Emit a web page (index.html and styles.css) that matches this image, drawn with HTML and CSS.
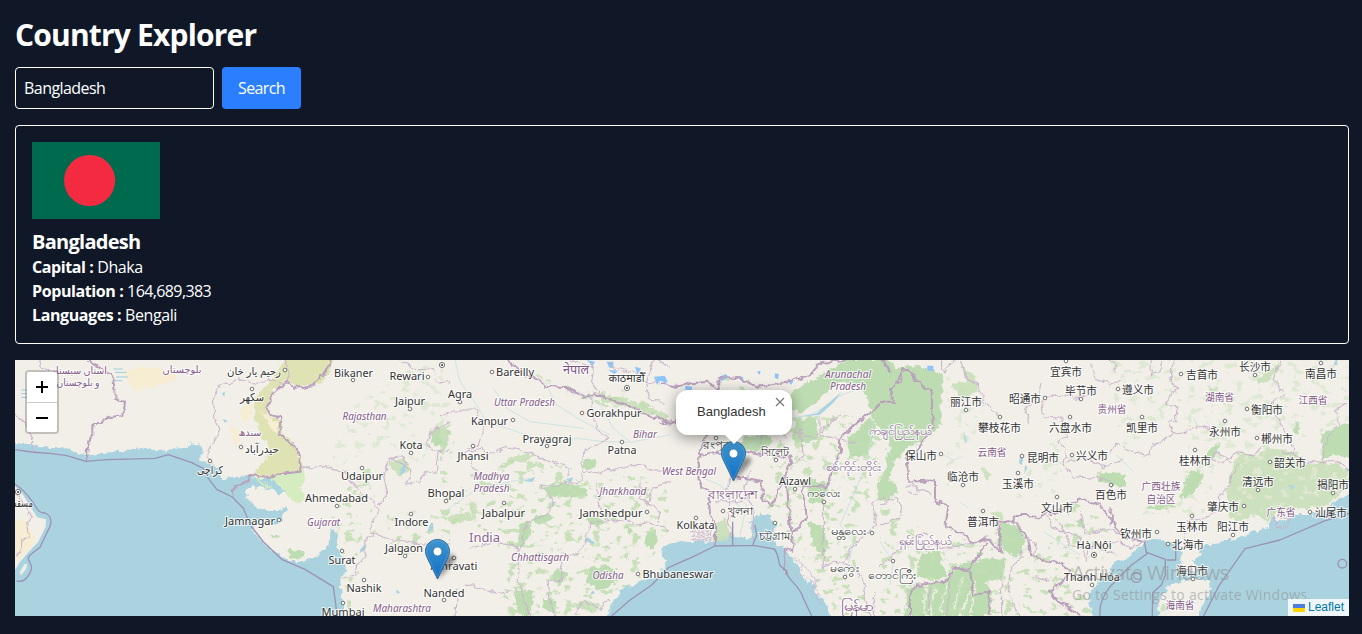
FILE: index.html
```html
<!DOCTYPE html>
<html lang="en">
<head>
<meta charset="utf-8">
<title>Country Explorer</title>
<link rel="stylesheet" href="styles.css">
</head>
<body>
<main class="page">
<h1 class="title">Country Explorer</h1>
<form class="search" onsubmit="return false">
  <input class="search-input" type="text" value="Bangladesh" aria-label="Country">
  <button class="search-button">Search</button>
</form>
<section class="card">
  <svg class="flag" viewBox="0 0 1000 600" role="img" aria-label="Flag of Bangladesh"><path fill="#006a4e" d="M0 0h1000v600H0z"/><circle cx="450" cy="300" r="200" fill="#f42a41"/></svg>
  <h2 class="name">Bangladesh</h2>
  <p><b>Capital :</b> <span>Dhaka</span></p>
  <p><b>Population :</b> <span class="number">164,689,383</span></p>
  <p><b>Languages :</b> <span>Bengali</span></p>
</section>
<section class="map">
<svg class="tiles" viewBox="15 360 1334 256">
<defs>
  <filter id="rough" x="-10%" y="-10%" width="120%" height="120%"><feTurbulence type="fractalNoise" baseFrequency=".045" numOctaves="3" seed="4"/><feDisplacementMap in="SourceGraphic" scale="20" xChannelSelector="R" yChannelSelector="G"/></filter>
  <filter id="edge" x="-10%" y="-10%" width="120%" height="120%"><feTurbulence type="fractalNoise" baseFrequency=".06" numOctaves="3" seed="9"/><feDisplacementMap in="SourceGraphic" scale="22" xChannelSelector="R" yChannelSelector="G"/></filter>
  <filter id="speckle"><feTurbulence type="fractalNoise" baseFrequency=".035 .05" numOctaves="5" seed="3" result="n"/><feColorMatrix in="n" values="0 0 0 0 0 0 0 0 0 0 0 0 0 0 0 10 0 0 0 -5.8"/><feComposite in="SourceGraphic" operator="in"/></filter>
  <filter id="shade" x="-1" y="-1" width="3" height="3"><feGaussianBlur stdDeviation="2"/></filter>
  <linearGradient id="blue" x2="0" y2="1"><stop stop-color="#3d95ce"/><stop offset="1" stop-color="#126fc6"/></linearGradient>
  <g id="pin"><path d="M12.5 41L27 25q6-7 1-9-6-2-10 7z" fill="#000" opacity=".42" filter="url(#shade)"/><path d="M12.5.5C5.8.5.5 5.8.5 12.3c0 3.2 1.2 5.5 2.6 8.4L12.5 40l9.4-19.3c1.4-2.9 2.6-5.2 2.6-8.4C24.500 5.800 19.200.500 12.500.500z" fill="url(#blue)" stroke="#2e6c97"/><path d="M12.500 1.600C6.400 1.600 1.600 6.400 1.600 12.300c0 3 1.100 5.200 2.500 7.900l8.400 17.300 8.400-17.300c1.400-2.700 2.500-4.900 2.500-7.900 0-5.900-4.800-10.700-10.900-10.700z" fill="none" stroke="#fff" stroke-opacity=".13"/><circle cx="12.500" cy="12.500" r="4.400" fill="#fff" stroke="#2e6c97" stroke-width=".7"/></g>
</defs>
<path fill="#f2efe9" d="M15 360h1334v256H15z"/>

<!-- Pakistan and western India -->
<g transform="translate(220 355) scale(.33333)">
  <g filter="url(#edge)">
    <path class="sea" d="M-640 262L-565 268-505 280-460 277-435 290-398 302-330 290-260 285-235 276-190 288-160 284-100 278-85 265-55 270-52 295-60 318-42 325-20 330-5 345 5 370 40 366 88 362 115 372 170 405 200 425 190 440 205 460 175 510 130 500 100 515 100 530 130 565 185 605 235 625 290 605 325 575 330 525 345 518 355 550 352 580 375 625 378 650 360 665 368 740 372 800H-640z"/>
    <path class="sand" d="M-285 40L-140 40-130 80-200 95-255 108-285 70zM100 140L90 200 65 195 60 165zM30 210L55 225 55 275 40 265z"/>
    <path class="scrub" d="M208 0L350 0 325 55 300 85 225 95 200 72 160 105 145 150 135 175 180 190 185 235 210 255 235 300 250 345 225 355 200 350 170 362 100 360 140 310 145 280 120 230 105 190 105 130 150 75z"/>
    <path class="sand" d="M120 165l50 35 15 50-35-35z"/>
    <path class="meadow" d="M105 370L250 345 260 375 240 395 258 430 230 445 195 420 180 385 150 400 130 390z"/>
    <path class="land" d="M78 405L100 393 150 403 195 412 215 435 200 452 182 465 150 470 110 455 80 430z"/>
    <path class="sea" d="M115 372h40l20 15 20 25-20 5-30-28z"/>
    <path class="wood" d="M148 540h35l-10 10zM205 585l40 3 10 15-20 8-25-8zM635 230l30-15 28 20-25 40-30 2z"/>
    <path class="lightwood" d="M500 325l55-20 15 40-25 25z"/>
  </g>
  <g class="speckle faint" filter="url(#speckle)"><path d="M360 180L500 90 600 20 690 50 690 170 600 330 500 260 420 300 330 350z"/></g>
  <g class="speckle" filter="url(#speckle)"><path d="M385 360L450 340 480 520 420 570 420 640 385 780 365 590 330 500zM500 480L690 450V600H510z"/></g>
  <g class="lake"><path d="M540 345q12-18 20-23l-6 30-18 10 8-13zM627 515q8-18 13-8l-2 20-15 3zM420 585q10-12 20-17l-5 18-16 8zM528 704l13 8-10 5zM5 115l10-5-2 15zM8 192l8 2 7 5-9 4z"/></g>
  <g class="border" filter="url(#rough)">
    <path class="national" d="M345 0L310 60 280 90 220 100 200 80 160 110 142 160 150 180 185 190 180 240 215 260 235 300 245 350 195 355 145 365 90 360 85 380 45 395 35 420"/>
    <path d="M-20 330L-40 300 0 225-15 190-20 130 0 90 60 75 110 85 160 75 200 85 208 55 190 0M245 335L325 335 350 345 375 350 410 400 460 440 475 465 450 515 460 540 430 560 440 600 410 630 405 660 370 670M475 450L505 420 490 360 510 310 540 320 570 345 560 390 600 380 620 350 645 355 655 290 690 285M690 200L630 230 620 270 650 290M690 85L650 80 640 40 590 45 540 15M450 530L500 550 570 560 690 570M505 310l40-5 25 25"/>
  </g>
</g>

<!-- Oman and Balochistan coast -->
<g transform="translate(0 355) scale(.33333)">
  <path class="land" d="M45 393L70 420 94 460 112 487 138 493 137 515 115 560 85 592 60 620 45 645zM60 650l14-24 7 2-3 14-16 20z"/>
  <path class="sand" d="M45 500l20-10 18 20 22 35-2 20-28 30-15 20-15-10z"/>
  <path class="stripes" d="M340 42h28M345 52h35M348 66h36M345 77h22M65 105h25M63 116h23M64 127h20"/>
  <g class="border">
    <g filter="url(#rough)"><path d="M117 15L120 35 145 45M45 177L75 205 98 250 98 290M45 410L98 488 80 500 85 550 65 555 65 590 50 600"/><path class="national" d="M265 15L300 40 340 60 345 135 375 140 370 180 315 190 300 210 280 210 280 240 265 255 260 318"/></g>
    <path class="marine" d="M45 284L95 291 155 296 200 302 258 319 320 314 465 310 505 299 575 323 610 340 625 370 650 403 697 426 730 460 752 512 790 560 845 613 915 643 1000 695 1012 783M45 387Q75 407 97 440C113 463 115 474 135 474 160 485 155 510 142 530L120 577 90 600C76 615 95 620 95 640 90 660 75 684 50 678"/>
  </g>
</g>

<!-- Central India -->
<g transform="translate(440 355) scale(.33333)">
  <g filter="url(#edge)">
    <path class="wood" d="M310 395l60-15 65 18 10 22-60 10-60-6zM430 310l40 5-5 28-40-5zM240 510l30-15 5 30-25 50-20 5zM275 490l45-15 25 10-50 30zM620 530l25-5 8 30-22 30-18-20zM550 510l30 15-15 12zM450 640l50-10 30 30-20 40-40 5-30-30zM350 640l35 20-25 30-25-20zM220 700l60 10-5 73h-40zM310 735h40l-5 35-35-10zM435 490l40-5 20 20-30 10z"/>
    <path class="lightwood" d="M0 490l90-20 20 20-60 15zM180 330l50-30 55-5-30 25zM465 115l80 12 85 30 60 25-5 15-90-35-100-18zM390 755l50-20 40 15-15 20zM0 220l20-10 5 60-20 25z"/>
  </g>
  <g class="speckle" filter="url(#speckle)"><path d="M60 370L250 300 380 330 450 370 580 350 680 400 690 520 600 670 520 750 440 783H180L210 600 80 500 0 510V440zM0 180L50 220 20 400H0zM220 20l120 50 80 40 120-10 110 60-20 40-150-50-100-30z"/></g>
  <path class="river" d="M45 15L60 80 110 150 140 200 230 230 320 265 410 250 490 260 570 262 690 240M160 100L200 160 270 200 430 220M415 110L480 150 520 220 570 260M315 80L350 150 430 200 510 240M20 465L100 410 210 380 270 370"/>
  <path class="lake" d="M250 378l35-12-7 15zM378 372l22-5-8 18zM440 545l25 18-10 5-18-12zM450 720l8-14 7 9zM575 685l-30 20 5 5z"/>
  <path class="sky" d="M440 15l25 5-7 13zM500 20h20v18h-12zM585 36l18 4-10 20zM642 65l32-3 10 20-25-5-8 13zM505 45l30 2-12 10z"/>
  <g class="border" filter="url(#rough)">
    <path class="national" d="M205 15L250 55 285 70 320 95 385 100 430 125 470 120 560 150 620 180 690 205"/>
    <path d="M385 15L460 35 455 85 475 110 450 120 470 220 510 250 430 290 425 380 390 385 385 335 340 325 270 295 200 275 145 300 125 280 75 290 110 350M0 185L45 165 110 165 130 220 115 270 80 280M425 345L480 355 500 340 530 345 600 325 630 345 690 345M470 380L480 460 500 500 560 495 600 510 620 500 690 525M385 385L305 395 345 440 320 480 265 500 240 580 210 570 165 560 130 570 90 580M500 500L450 505 435 560 420 595 360 605 370 675 325 680 330 740 350 783M240 580L235 680 270 783M80 690L130 700 170 715 220 710M45 783L50 700M640 15L620 80 625 130 670 145M655 15L690 40M400 783L430 740 480 760 510 735M600 380L600 430 655 460 655 500M690 380L640 400 620 450 600 430M500 20L530 40 575 50 610 80 660 80"/>
  </g>
</g>

<!-- Bangladesh, the Bay of Bengal and Myanmar -->
<g transform="translate(660 355) scale(.33333)">
  <g filter="url(#edge)">
    <path class="sea" d="M-165 800L-140 740-110 700-60 680-10 665 10 640 22 620 2 600 5 578 30 565 90 560 155 560 165 545 215 540 245 548 270 535 262 500 290 487 310 475 330 480 345 510 350 545 345 570 370 580 395 610 420 640 430 670 465 690 480 720 505 760 520 800z"/>
    <path class="wood" d="M395 165L355 140 430 90 560 15H690L710 40 770 30 850 60 840 220 790 250 730 290 690 340 680 440 650 430 655 380 700 320 680 230 640 200 625 140 600 90 540 80 480 130 430 170zM250 250l65-20 25 30-50 30-60-10zM410 195l60-5 5 55-30 20-50-10zM445 370l60 15-15 60-45-5zM445 500l40 10 20 60-20 35-30-50zM560 235l70-45 20 30-25 80-55 10z"/>
    <path class="land" d="M500 190l50-25 50-15 40 20-50 60-80 45zM700 160l40-30 30 20-30 80-40 30z"/>
    <path class="lightwood" d="M170 505l25-15 20 55-25 12h-30z"/>
    <path class="land" d="M225 500l20-12 28 15 2 40-15 15-15-30-15 22zM465 690l20 15-3 18-18-10z"/>
  </g>
  <g class="speckle" filter="url(#speckle)"><path d="M180 65L270 70 380 120 430 160 560 180 640 200 690 300 690 500 610 430 580 600 630 783H530L440 620 390 560 310 440 330 330 380 200 270 120z"/></g>
  <path class="river" d="M560 50L600 100 545 120 510 145 450 180 390 190 340 200 220 330 200 400 260 450 240 540M130 370L180 390 260 480M640 200L620 330 540 510 580 560 555 680"/>
  <path class="water" d="M545 110l-35 30-40 35-50 10 60-6 40-36z"/>
  <path class="sky" d="M0 65l20 10-5 15zM180 65l18-8 7 10-20 12zM232 65h17v13zM290 50l12-3-3 12zM345 55l12 3-3 15-10-5zM382 78l20-4-8 15zM75 92l22 3-5 20-15-5z"/>
  <g class="border" filter="url(#rough)">
    <path class="national" d="M0 85L50 95 95 85 145 80 175 110 180 65 240 70 290 95 340 90 400 75 450 60 480 25 590 10M0 205L60 200 100 200 140 240 130 270 115 300 175 290 225 315 260 290 300 300 350 300 395 305 380 350 370 385 355 405 335 455 310 435 305 380 215 365 205 325M115 300L120 390 145 410 150 480 165 500 165 575M380 385L385 440 395 540 400 590 370 580 375 640 380 660M690 130L650 155 620 180 590 205 540 250 540 290 505 380 500 395 430 390 440 490 400 530M690 50L665 15"/>
    <path d="M215 365L200 400 210 440 205 490 215 560M270 340L255 410 280 460 280 560M165 440L240 440 260 420M300 300L305 230 360 220 380 250M400 230L470 250 500 210 540 180M410 320L430 300 420 220M480 190L480 240 590 265M495 395L490 440 490 590 490 640M690 420L635 440 650 510 610 545 580 570 550 620M490 635L540 620 590 640 615 690 610 720 630 783M645 710L640 783"/>
  </g>
  <path class="border mesh" filter="url(#rough)" d="M95 520L155 525M90 532L155 535M92 544L155 545M95 554H155M105 515V560M117 510V560M129 518V560M141 520V560M152 525V560M390 610L430 630 425 660 465 685 460 715 490 750M405 605L460 660 475 720M385 630L420 680"/>
  <path class="border marine" d="M-145 783L-90 735-25 690 25 638 95 607 165 573 280 571 343 582C365 610 345 630 377 645 380 675 420 690 430 730L455 783M218 500V571M285 510L290 540 278 571"/>
</g>

<!-- Yunnan, Laos and northern Vietnam -->
<g transform="translate(880 355) scale(.33333)">
  <g filter="url(#edge)">
    <path class="wood" d="M0 100L55 60 120 100 155 115 155 210 110 260 55 260 0 220zM20 300l30-10-15 60-20 30zM0 375l35 5 25 30-60 25zM120 600l60-15 5 45 20 35-45 10-50-10zM80 700l110-20 50-50 80-20 60 5-15 55-60 15-40 30-30 68H75zM290 660l40 40 5 83h-90zM360 505l50 5 25 40-5 45-30 10-45-35zM652 355l70 0v40l-70-20zM585 500l30-15-5 40z"/>
    <path class="lightwood" d="M210 90l70-15 15 30-45 30zM300 330l30 30-10 15zM240 30l50 40-10 25zM330 470l40 5-5 20z"/>
    <path class="stripe-land" d="M140 690l-10 90M165 700l-15 80M205 680l-25 90M250 665l-30 100M285 675l-10 100"/>
  </g>
  <g class="speckle" filter="url(#speckle)"><path d="M0 400L120 520 120 783H0zM120 580L350 530 450 570 580 640 640 783H150zM540 430L690 480 670 620 500 600z"/></g>
  <g class="speckle faint" filter="url(#speckle)"><path d="M200 60L330 130 260 300 200 400zM500 250L620 300 520 420 400 430z"/></g>
  <path class="sky" d="M142 32h18v18l-18-5z"/><path class="lake" d="M420 305l10 5-5 20-8-5zM435 330l7 8-9 20zM250 230l10 30-5 5z"/>
  <path class="river" d="M250 230L265 260M0 560L40 620 30 690M190 300l30 15 30-10M490 530L600 600M240 440l25 20"/>
  <g class="border" filter="url(#rough)">
    <path class="national" d="M0 140L40 145 30 100 60 80 65 40 90 50 125 90 155 110 158 215 130 260 110 290 80 310 85 380 165 375 165 440 205 455 195 520 240 530 280 565 325 550 360 590 355 500 395 495 410 480 440 480 475 490 515 465 515 480 600 430 660 450 700 500 690 510M395 495L440 540 450 600 500 620 545 625 570 650 555 670 510 710 520 730 590 770 600 783M320 560L270 640 215 640 200 680 110 690 90 720 90 783M215 640L270 650 280 720 330 710 325 783"/>
    <path d="M180 15L190 50 225 15M240 15L265 75 295 90 310 140 360 185M720 75L690 90 640 65 635 25M480 80L470 130 440 155 445 205M490 180L485 140 510 120 590 130 640 110M490 185L545 190 560 245 535 260 560 295 550 330 580 365 640 370 720 380M560 325l50-20 60 30 60-25M0 450L50 430 65 455 60 490 0 510M85 380L115 400 155 420M100 560L195 580 280 565M0 635L50 590 100 550 140 530M150 700L145 783M215 640L200 783M400 490L420 540 470 570 460 610M430 590L390 645 385 720 420 783M500 470L510 510 550 530 600 550 620 620M540 500L570 570 610 580 690 560M600 470L620 540 690 520 720 540M620 600L640 570 710 600M465 665l40 10M365 650v130M80 390L110 400 115 420 85 410"/>
  </g>
</g>

<!-- South China -->
<g transform="translate(1110 355) scale(.33333)">
  <g filter="url(#edge)">
    <path class="sea" d="M-50 800L-65 735-45 690 0 655 10 625 30 618 50 610 90 575 110 560 150 548 170 560 210 565 215 600 210 645 265 650 245 620 270 605 265 585 275 572 330 565 380 550 430 530 470 520 490 480 500 500 530 490 550 480 600 480 640 470 690 430 745 405V800z"/>
    <path class="land" d="M145 800L145 740 170 700 210 680 260 675 300 675 302 700 280 750 265 800z"/>
    <path class="wood" d="M0 355h45v40L0 392zM240 350l25-5 15 20-30 50-40 20 10-40zM105 455l80-10 15 10-60 10zM300 280l30-20-15 45-25 10zM555 200l15 5-5 35-15-10zM635 235l90-35v110l-60-10-30 15z"/>
    <path class="lightwood" d="M385 295L440 300 470 280 560 290 575 330 640 320 690 330 717 350 710 400 650 450 580 460 520 460 470 500 440 480 380 500 360 480 350 400 365 350zM290 90l30 10-15 25zM440 80l65-60 10 15-50 50zM150 765l15-20 10 25z"/>
  </g>
  <g class="speckle faint" filter="url(#speckle)"><path d="M0 15H190L180 200 30 280zM260 220L360 240 280 480 80 500 200 350zM190 15H717V200L500 280 370 290 200 220z"/></g>
  <g class="speckle pale" filter="url(#speckle)"><path d="M390 300L560 300 700 340 690 410 520 450 370 490z"/></g>
  <path class="lake" d="M535 390l20 2-10 12zM670 30l10-20 3 20z"/><path class="river" d="M20 300L70 350M250 190L260 205M500 410l60-20M180 730l20 20"/>
  <g class="border" filter="url(#rough)">
    <path d="M120 15L125 60 150 50 155 15M190 15L180 70 200 100 165 145 200 155 200 200 175 200 195 235M0 295L20 265 50 285 115 300 130 270 195 235 220 230 270 215 320 225M515 15L490 60 520 120 480 145 510 200 545 270 550 300 520 290M365 325L320 290 300 310M300 310L335 325 385 290 430 300 460 275M385 325L360 380 330 420 325 460 285 490 230 500 225 560M550 300L590 320 635 320 640 280 665 230 685 210 680 160 717 145M635 320L690 320 715 350M0 560L30 560 65 580 110 555M490 490L540 490 535 515 500 515zM0 15L20 30 10 55"/>
    <path class="national" d="M0 460L15 520 50 550 100 560"/>
  </g>
  <path class="border marine" d="M0 695L65 630 110 597 103 560M110 592L166 613 166 660 154 690 128 713 127 783M170 615H197V560M281 783L327 692 405 581 510 555 640 499 717 475M-30 783Q-35 740 0 695"/>
  <circle class="border marine" cx="79" cy="667" r="15"/><circle class="border marine" cx="697" cy="626" r="13"/>
</g>
<g id="labels"></g>
<use href="#pin" x="425" y="539"/><use href="#pin" x="721" y="441"/>
</svg>
<div class="zoom"><button aria-label="Zoom in"><svg viewBox="0 0 12 12"><path d="M0 6h12M6 0v12"/></svg></button><button aria-label="Zoom out"><svg viewBox="0 0 12 12"><path d="M0 6h12"/></svg></button></div>
<div class="popup">Bangladesh<svg class="close" viewBox="0 0 8 8"><path d="M0 0l8 8M8 0L0 8"/></svg></div>
<div class="system-note"><div class="note-title">Activate Windows</div><div class="note-text">Go to Settings to activate Windows.</div></div>
<div class="credit"><svg viewBox="0 0 12 8"><path fill="#4c7be1" d="M0 0h12v4H0z"/><path fill="#ffd500" d="M0 4h12v4H0z"/></svg><a>Leaflet</a></div>
</section>
</main>
<script src="map.js"></script>
</body>
</html>
```
FILE: map.js
```js
// Each label: text, centre x, baseline y, drawn width, kind, optional town dot x and y.
const labels = [
["استان سیستان",78,374,58,"region"],["و بلوچستان",78,386,43,"region"],["بلوچستان",182,373,39,"region"],["رحیم یار خان",254,375,54,"city",285,370],["سکهر",252,401,24,"city",252,389],["سندھ",250,436,23,"region"],["حیدرآباد",262,453,34,"city",241,447],["کراچی",210,474,26,"city",210,461],["مسقط",21,507,24,"city",18,492,2],
["Bikaner",353.500,377,39,"city",353,380],["Rewari",407,380,35,"city",428,377],["Jaipur",410,405,30,"city",410,409],["Rajasthan",364.500,420,44,"region"],["Kota",411,449,23,"city",411,453],["Udaipur",362,480,42,"city",362,468],["Ahmedabad",336.500,502,63,"city",337,506],["Jamnagar",250,525,50,"city",279,520],["Gujarat",323.500,526,33,"region"],["Indore",411.500,526,34,"city",411,514],["Jalgaon",404,552,38,"city",405,556],["Surat",342,564,27,"city",342,551],["Nashik",364,592,35,"city",364,580],["Mumbai",343,616,43,"city",343,603],["Maharashtra",402,612,58,"region"],["Nanded",444,597,41,"city",444,600],["Amravati",454,570,47,"city",454,558],["",0,0,0,"city",442,365,2],
["Bareilly",515,376,38,"city",492,372],["Agra",460,398,24,"city",460,402],["Uttar Pradesh",524.500,406,61,"region"],["Kanpur",489.500,425,37,"city",513,420],["Prayagraj",547,443,49,"city",547,446],["Jhansi",473,460,31,"city",473,446],["Madhya",491.500,480,36,"region"],["Pradesh",491.500,492,36,"region"],["Bhopal",446,497,37,"city",446,501],["Jabalpur",503.500,517,43,"city",504,503],["India",484.500,542,31,"country"],["Chhattisgarh",540,561,58,"region"],["नेपाल",576,374,26,"nation"],["काठमाडौँ",626.500,382,36,"city",627,388,2],["Gorakhpur",614,417,55,"city",582,413],["Bihar",645,438,24,"region"],["Patna",622,454,29,"city",622,442],["Jharkhand",623,495,47,"region"],["Jamshedpur",611,517,63,"city",647,512],["Odisha",608,579,31,"region"],["Bhubaneswar",678,578,71,"city",638,574],
["Kolkata",695.500,529,38,"city",696,518],["West Bengal",689,475,54,"region"],["রংপুর",716,449,26,"city",716,438],["সিলেট",775,456,28,"city",776,460],["বাংলাদেশ",733,499,50,"nation"],["খুলনা",740,515,25,"city",723,511],["চট্টগ্রাম",774.500,540,31,"city",775,523],["Aizawl",795,485,32,"city",795,489],["ကလေး",824,497,35,"city",824,502],["Arunachal",848,378,46,"region"],["Pradesh",848,390,36,"region"],["ကချင်ပြည်နယ်",900,435,63,"region"],["စစ်ကိုင်းတိုင်း",854,471,56,"region"],["မန္တလေး",849,535,37,"city",872,533],["မကွေး",845,572,30,"city",845,577],["တောင်ကြီး",893,579,50,"city",893,561],["မြန်မာ",857,611,32,"nation"],["ရှမ်းပြည်နယ်",925,545,53,"region"],
["宜宾市",1066,376,32,"city",1066,361],["毕节市",1081,395,32,"city",1081,399],["昭通市",1025,403,32,"city",1045,398],["丽江市",966,406,32,"city",966,410],["攀枝花市",999.500,432,43,"city",1000,417],["六盘水市",1070.500,432,43,"city",1070,417],["贵州省",1112,413,29,"region"],["保山市",921,460,32,"city",941,454],["云南省",992,456,29,"region"],["昆明市",1043,462,32,"city",1022,456],["兴义市",1092,460,32,"city",1072,455],["临沧市",963,481,32,"city",963,485],["玉溪市",1018,488,32,"city",1018,473],["百色市",1111,499,32,"city",1111,485],["文山市",1057,512,32,"city",1057,497],["普洱市",983,526,32,"city",983,511],["Hà Nội",1094,549,35,"city",1094,555,2],["Thanh Hóa",1092,581,56,"city",1092,585],
["吉首市",1202,379,32,"city",1181,374],["长沙市",1255,371,32,"city",1255,375],["南昌市",1321,378,32,"city",1321,363],["遵义市",1138,394,32,"city",1118,389],["湖南省",1219.500,401,29,"region"],["江西省",1313,404,29,"region"],["凯里市",1142,432,32,"city",1142,417],["衡阳市",1267,414,32,"city",1247,409],["永州市",1225,436,32,"city",1225,421],["郴州市",1277,443,32,"city",1257,438],["桂林市",1195,465,32,"city",1195,450],["韶关市",1290,467,32,"city",1270,462],["清远市",1258,486,32,"city",1258,490],["揭阳市",1333,489,32,"city",1333,493],["广西壮族",1161,490,39,"region"],["自治区",1161,503,29,"region"],["肇庆市",1223,511,32,"city",1244,506],["广东省",1281,516,29,"region"],["汕尾市",1331,517,32,"city",1310,512],["玉林市",1192,531,32,"city",1192,516],["阳江市",1233,531,32,"city",1233,535],["钦州市",1136,538,32,"city",1157,532],["北海市",1188,549,32,"city",1168,544],["海口市",1192,575,32,"city",1193,579],["海南省",1180,609,29,"region"]
];
const ns = "http://www.w3.org/2000/svg";
const layer = document.getElementById("labels");
const add = (name, attrs) => {
  const el = document.createElementNS(ns, name);
  Object.entries(attrs).forEach(([k, v]) => el.setAttribute(k, v));
  layer.append(el);
  return el;
};
labels.forEach(([text, x, y, width, kind, dx, dy, capital]) => {
  if (dx) {
    add("circle", {cx: dx, cy: dy, r: capital ? 2.6 : 1.8, class: "dot"});
    if (capital) add("circle", {cx: dx, cy: dy, r: 1, class: "dot-core"});
  }
  // Only Latin region names are slanted.
  const upright = /^[A-Za-z]/.test(text) ? "" : " upright";
  if (text) add("text", {x, y, class: kind + upright, textLength: width, lengthAdjust: "spacingAndGlyphs"}).textContent = text;
});
```
FILE: styles.css
```css
*{box-sizing:border-box}
body{margin:0;background:#101828;color:#fff;font:16px/24px "Open Sans","Noto Sans",sans-serif}
h1,h2,p{margin:0}
.page{padding:15px 13px 18px 15px;display:flex;flex-direction:column;gap:16px}
.title{font-size:30px;line-height:36px;font-weight:700;height:36px;padding-top:2px;letter-spacing:-.83px}
.search{display:flex;gap:8px}
.search-input{width:199px;height:42px;border:1px solid #fff;border-radius:4px;background:transparent;color:#fff;padding:8px;font:inherit;letter-spacing:-.55px}
.search-button{width:79px;height:42px;border:0;border-radius:4px;background:#2b7fff;color:#fff;font:inherit;padding:0;letter-spacing:-.6px}
.card{border:1px solid #fff;border-radius:4px;padding:16px;height:219px}
.flag{display:block;width:128px;height:77px;margin-bottom:8px}
.name{font-size:20px;line-height:28px;height:28px;padding-top:1px;font-weight:700;letter-spacing:-.72px}
.card p{letter-spacing:-.4px}
.card .number{letter-spacing:-.6px}
.map{position:relative;height:256px;overflow:hidden;background:#ddd}
.tiles{display:block;width:1334px;height:256px}
.sea{fill:#aad3df}.land{fill:#f2efe9}.sand{fill:#f6edd3}.scrub{fill:#dfe2b3}.meadow{fill:#d5ecc0}
.wood{fill:#bddcb1}.lightwood{fill:#c9e0b9;opacity:.9}
.speckle{fill:#c2deb4;opacity:.85}
.faint{opacity:.4}
.pale{fill:#e3e9d4}
.stripes{fill:none;stroke:#9bcfdd;stroke-width:3}
.stripe-land{fill:none;stroke:#eaede0;stroke-width:6}
.sky{fill:#8fc4f8}.lake,.water{fill:#aad3df}
.river{fill:none;stroke:#c6e0e5;stroke-width:2.500}
.border{fill:none;stroke:#c9b6cb;stroke-width:3.200;stroke-linejoin:round}
.national{stroke:#b9a0bb;stroke-width:6}
.marine{stroke:#9b93b4;stroke-width:4}
.mesh{stroke-width:2.500}
.dot{fill:#fff;stroke:#555;stroke-width:.8}.dot-core{fill:#333}
.tiles text{font-family:"Noto Sans","Noto Sans CJK SC","DejaVu Sans",sans-serif;font-size:11px;text-anchor:middle;paint-order:stroke;stroke:#fff;stroke-opacity:.8;stroke-width:2.200px;stroke-linejoin:round;fill:#333}
.tiles .region{font-size:10px;font-style:italic;fill:#845c88}
.tiles .upright{font-style:normal}
.tiles .country{font-size:13px;fill:#8b638e}
.tiles .nation{font-size:12px;fill:#7d5481}
.zoom{position:absolute;left:10px;top:10px;border:2px solid rgba(0,0,0,.2);border-radius:4px;width:34px;background-clip:padding-box}
.zoom button{display:flex;align-items:center;justify-content:center;width:30px;height:29px;border:0;background:#fff;border-radius:0 0 2px 2px;padding:0}
.zoom button:first-child{height:31px;border-bottom:1px solid #ccc;border-radius:2px 2px 0 0}
.zoom svg{width:12px;height:12px;stroke:#000;stroke-width:2}
.popup{position:absolute;left:661px;top:30px;width:116px;height:45px;border-radius:12px;background:#fff;color:#333;font:13px/17px "Liberation Sans",Arial,sans-serif;padding:13px 20px 13px 21px;box-shadow:0 3px 14px rgba(0,0,0,.4)}
.popup::after{content:"";position:absolute;left:48px;top:44px;border:solid transparent;border-width:10px 10px 0;border-top-color:#fff}
.close{position:absolute;right:8px;top:8px;width:8px;height:8px;fill:none;stroke:#757575;stroke-width:1.200;overflow:visible}
.system-note{position:absolute;left:1057px;top:200px;color:rgba(145,145,145,.58);white-space:nowrap}
.note-title{font-size:20px;line-height:25px;letter-spacing:-.45px}
.note-text{font-size:14px;line-height:20px;letter-spacing:.28px}
.credit{position:absolute;right:0;bottom:0;width:61px;height:17px;padding:0 5px;background:rgba(255,255,255,.8);display:flex;align-items:center;gap:3px;font:12px/17px "Liberation Sans",Arial,sans-serif;color:#0078a8}
.credit svg{width:12px;height:8px}
```
